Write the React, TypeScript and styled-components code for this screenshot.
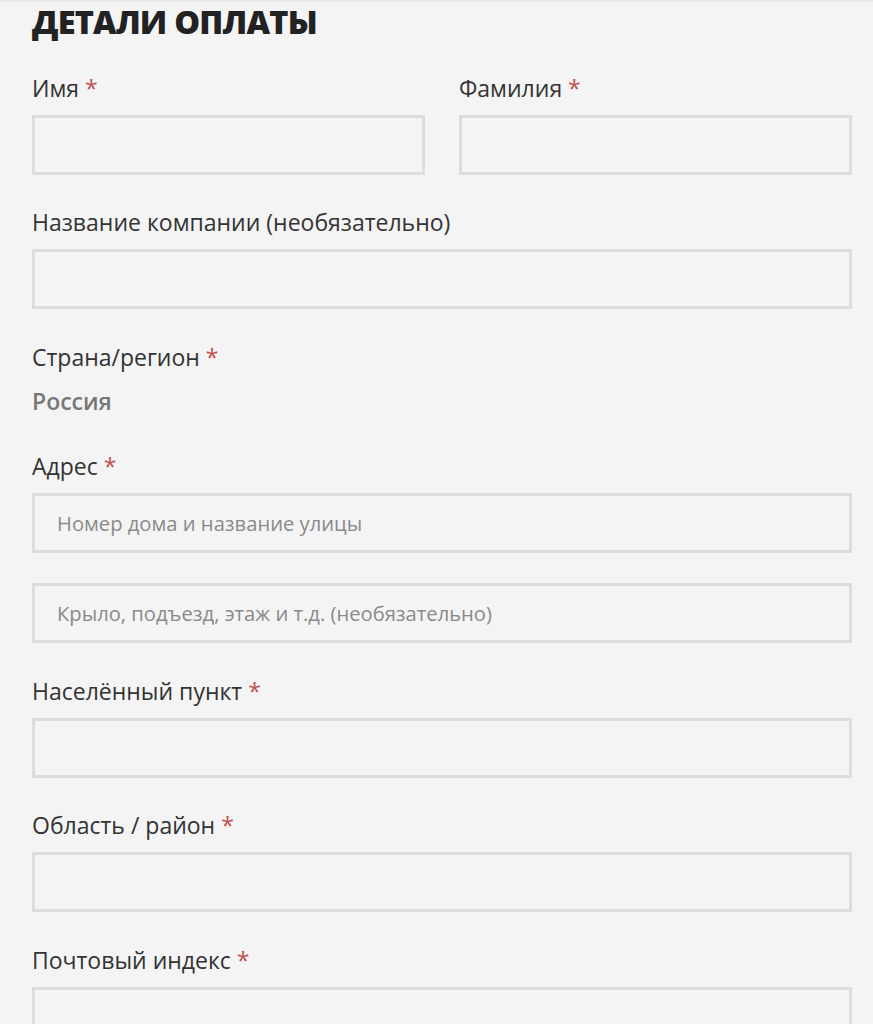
import React, { FC } from 'react'
import styled, { createGlobalStyle } from 'styled-components'

const GlobalStyle = createGlobalStyle`
  html, body {
    margin: 0;
    padding: 0;
    background: #f4f4f4;
  }
  body {
    font-family: 'Open Sans', 'Noto Sans', sans-serif;
    color: #333;
  }
`

type FieldProps = {
  label: string
  required?: boolean
}

const Field: FC<FieldProps & { children: React.ReactNode }> = ({ label, required, children }) => (
  <Row>
    <Label>
      {label}
      {required && <Req> *</Req>}
    </Label>
    {children}
  </Row>
)

const App: FC = () => (
  <>
    <GlobalStyle />
    <Page>
      <Title>Детали оплаты</Title>
      <Cols>
        <Field label="Имя" required>
          <Input />
        </Field>
        <Field label="Фамилия" required>
          <Input />
        </Field>
      </Cols>
      <Field label="Название компании (необязательно)">
        <Input />
      </Field>
      <Field label="Страна/регион" required>
        <Country>Россия</Country>
      </Field>
      <Field label="Адрес" required>
        <Stack>
          <Input placeholder="Номер дома и название улицы" />
          <Input placeholder="Крыло, подъезд, этаж и т.д. (необязательно)" />
        </Stack>
      </Field>
      <Field label="Населённый пункт" required>
        <Input />
      </Field>
      <Field label="Область / район" required>
        <Input />
      </Field>
      <Field label="Почтовый индекс" required>
        <Input />
      </Field>
    </Page>
  </>
)

export default App

const Page = styled.div`
  padding: 0 21px 0 32px;
  height: 1024px;
  box-sizing: border-box;
  overflow: hidden;
  box-shadow: inset 0 3px 3px -2px rgba(0, 0, 0, 0.08);
`
const Title = styled.h3`
  margin: 0 0 25.5px;
  font-size: 32.5px;
  line-height: 44px;
  font-weight: 800;
  text-transform: uppercase;
  letter-spacing: -0.8px;
  color: #222;
`
const Cols = styled.div`
  display: grid;
  grid-template-columns: 1fr 1fr;
  column-gap: 34px;
`
const Row = styled.div`
  margin-bottom: 29.5px;
`
const Label = styled.label`
  display: block;
  margin-bottom: 9px;
  font-size: 23px;
  line-height: 36px;
  color: #333;
`
const Req = styled.span`
  color: #c0504d;
`
const Input = styled.input`
  display: block;
  width: 100%;
  height: 60px;
  box-sizing: border-box;
  padding: 0 22px;
  border: 3px solid #dddddd;
  background: #f4f4f4;
  font-family: 'Open Sans', sans-serif;
  font-size: 20.2px;
  color: #333;
  outline: none;

  &::placeholder {
    color: #8a8a8a;
  }
`
const Stack = styled.div`
  display: flex;
  flex-direction: column;
  gap: 30px;
`
const Country = styled.div`
  margin-top: -1px;
  font-size: 23px;
  line-height: 36px;
  font-weight: 600;
  color: #777;
`
